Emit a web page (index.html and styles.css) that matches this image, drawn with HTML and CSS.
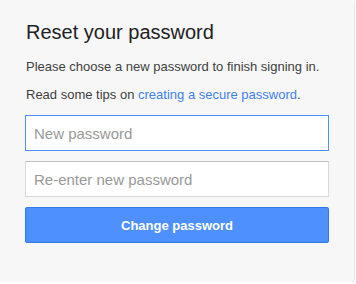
FILE: index.html
```html
<!DOCTYPE html>
<html>
<head>
<meta charset="utf-8">
<link rel="stylesheet" href="styles.css">
</head>
<body>
<div class="card">
  <h1 class="title">Reset your password</h1>
  <p class="text first">Please choose a new password to finish signing in.</p>
  <p class="text second">Read some tips on <a class="link" href="#">creating a secure password</a>.</p>
  <div class="field focused"><span class="placeholder">New password</span></div>
  <div class="field"><span class="placeholder">Re-enter new password</span></div>
  <button class="button">Change password</button>
</div>
</body>
</html>
```
FILE: styles.css
```css
html, body {
  margin: 0;
  padding: 0;
  background: #ffffff;
}
body {
  font-family: Arial, "Liberation Sans", sans-serif;
}
.card {
  box-sizing: border-box;
  width: 354px;
  height: 282px;
  padding: 20px 25px 0 25px;
  background: #f7f7f7;
  border-radius: 0 2px 2px 0;
  box-shadow: 0 1px 2px rgba(0, 0, 0, 0.3);
  display: flex;
  flex-direction: column;
}
.title {
  margin: 0;
  font-size: 20px;
  line-height: 24px;
  font-weight: normal;
  color: #222222;
  padding-left: 1px;
}
.text {
  margin: 0;
  font-size: 13px;
  line-height: 17px;
  color: #404040;
  padding-left: 1px;
}
.first { margin-top: 14px; }
.second { margin-top: 11px; }
.link {
  color: #427fed;
  text-decoration: none;
}
.field {
  box-sizing: border-box;
  height: 36px;
  margin-top: 10px;
  background: #ffffff;
  border: 1px solid #d9d9d9;
  border-top-color: #c0c0c0;
  padding: 0 8px;
  display: flex;
  align-items: center;
  font-size: 15px;
  color: #999999;
}
.focused {
  margin-top: 12px;
  border-color: #4d90fe;
}
.button {
  box-sizing: border-box;
  height: 36px;
  margin-top: 10px;
  background: #4d90fe;
  border: 1px solid #3079ed;
  border-radius: 2px;
  color: #ffffff;
  font-family: Arial, "Liberation Sans", sans-serif;
  font-size: 13px;
  font-weight: bold;
  padding: 0;
}
```
